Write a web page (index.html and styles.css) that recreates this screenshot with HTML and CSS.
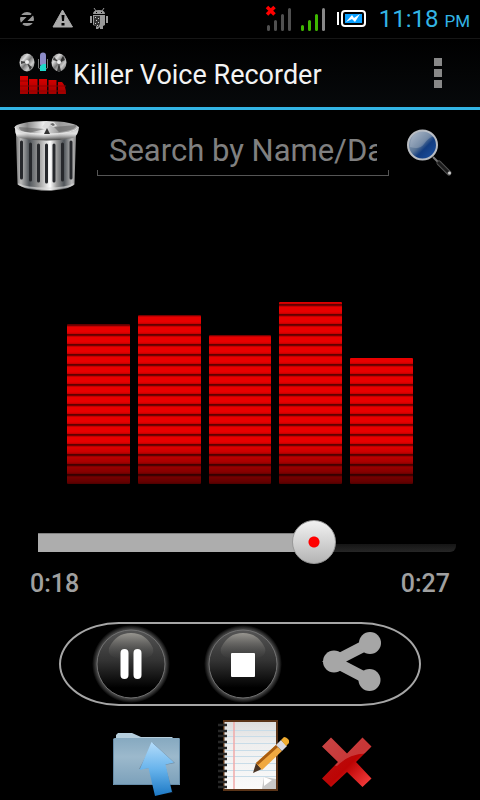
FILE: index.html
```html
<!DOCTYPE html>
<html lang="en">
<head>
    <meta charset="UTF-8">
    <meta name="viewport" content="width=device-width, initial-scale=1.0">
    <title>Killer Voice Recorder</title>
    <link rel="stylesheet" href="styles.css">
</head>
<body>

    <!-- Status bar -->
    <div class="status">
        <svg class="status-left" width="96" height="38" viewBox="16 0 96 38">
            <circle cx="27" cy="19" r="7" fill="#999"/>
            <path d="M20 16h9l-8 8M33 14l-8 8h9" fill="none" stroke="#000" stroke-width="2"/>
            <path d="M62.500 10L72.500 27H53Z" fill="#aaa" stroke="#aaa" stroke-linejoin="round"/>
            <path d="M61.500 15h3l-.5 6h-2zM61.500 23h3v2.500h-3z" fill="#000"/>
            <path d="M94 8l2 3M104 8l-2 3" stroke="#999" stroke-width="1"/>
            <path d="M93 14q0-4 6-4t6 4zM93 15h12v10l-2 1v3h-3v-2l-2 2h-2v-3l-3-1z" fill="#999"/>
            <path d="M90 16h2v7h-2zM106 16h2v7h-2z" fill="#999"/>
            <path d="M94 16h6v8l-2 3-4-2z" fill="#333"/>
            <path d="M95 17h1v1h-1zM98 18h1v1h-1zM96 20h1v1h-1zM98 22h1v1h-1zM95 23h1v1h-1zM97 25h1v1h-1z" fill="#ccc"/>
            <path d="M96 12h1v1h-1zM101 12h1v1h-1z" fill="#000"/>
        </svg>
        <div class="status-right">
            <svg width="106" height="38" viewBox="263 0 106 38">
                <g stroke-width="3" stroke-linecap="round">
                    <path d="M268.500 26.500v3M275.500 21.500v8M282.500 15.500v14M289.500 9.500v20" stroke="#505050"/>
                    <path d="M302.500 26.500v3M309.500 21.500v8M316.500 15.500v14" stroke="#3fb800"/>
                    <path d="M323.500 9.500v20" stroke="#888"/>
                </g>
                <path d="M267 7l7.500 7.500M274.500 7l-7.500 7.500" stroke="#f00" stroke-width="3.500"/>
                <path d="M338 12v13" stroke="#fff" stroke-width="2"/>
                <rect x="342" y="11" width="23" height="15" rx="3" fill="#000" stroke="#fff" stroke-width="2"/>
                <rect x="345" y="14" width="17" height="9" fill="#0aa0ff"/>
                <path d="M346 22l6-7 2 3 6-4-5 8-3-3z" fill="#fff"/>
            </svg>
            <div class="clock">11:18 <span>PM</span></div>
        </div>
    </div>

    <!-- Action bar -->
    <header class="header">
        <svg width="50" height="50" viewBox="18 49 50 50">
            <defs>
                <linearGradient id="reel" x1="0" y1="0" x2="1" y2="1">
                    <stop offset="0" stop-color="#555"/><stop offset=".3" stop-color="#ddd"/>
                    <stop offset=".5" stop-color="#777"/><stop offset=".7" stop-color="#ccc"/>
                    <stop offset="1" stop-color="#444"/>
                </linearGradient>
                <linearGradient id="red" x1="0" y1="0" x2="0" y2="1">
                    <stop offset="0" stop-color="#e00000"/><stop offset="1" stop-color="#a00000"/>
                </linearGradient>
            </defs>
            <ellipse cx="27" cy="63.500" rx="7.500" ry="9" fill="url(#reel)"/>
            <ellipse cx="59" cy="63.500" rx="7.500" ry="9" fill="url(#reel)"/>
            <path d="M27 63l-6-1v3zM27 64l3 7 2-3zM59 63l-5-5-1 3zM59 64l4-7 2 4zM59 64l-2 8h4z" fill="#111" opacity=".75"/>
            <circle cx="27" cy="63" r="2" fill="#eee"/>
            <circle cx="59" cy="63" r="2" fill="#eee"/>
            <path d="M38.500 60v9l3 2h3l3-2v-9" fill="none" stroke="#777"/>
            <rect x="40" y="53.500" width="6" height="14" rx="3" fill="#8c8cc8"/>
            <path d="M40 67l3-2h3v7h-6z" fill="#20d8cc"/>
            <path d="M20 77h8v18h-8zM29 80h8.500v15h-8.500zM39 80h8v15h-8zM48.500 81h8v14h-8zM58 83h4q4 4 4 12h-8z" fill="url(#red)"/>
            <path d="M20 82h8M20 87h46M20 92h46" stroke="#900000"/>
        </svg>
        <h1>Killer Voice Recorder</h1>
        <button class="menu" aria-label="More options">
            <svg width="8" height="30" viewBox="0 0 8 30"><path d="M0 0h8v8H0zM0 11h8v8H0zM0 22h8v8H0z" fill="#888"/></svg>
        </button>
    </header>

    <!-- Search -->
    <form class="search">
        <button type="button" aria-label="Delete recordings">
            <svg width="70" height="82" viewBox="12 110 70 82">
                <defs>
                    <linearGradient id="can" x1="0" y1="0" x2="1" y2="0">
                        <stop offset="0" stop-color="#777"/><stop offset=".08" stop-color="#bbb"/>
                        <stop offset=".22" stop-color="#50555a"/><stop offset=".38" stop-color="#999"/>
                        <stop offset=".57" stop-color="#fff"/><stop offset=".68" stop-color="#999"/>
                        <stop offset=".8" stop-color="#50555a"/><stop offset=".93" stop-color="#bbb"/>
                        <stop offset="1" stop-color="#888"/>
                    </linearGradient>
                    <linearGradient id="lid" x1="0" y1="0" x2="1" y2="0">
                        <stop offset="0" stop-color="#ddd"/><stop offset=".2" stop-color="#888"/>
                        <stop offset=".45" stop-color="#eee"/><stop offset=".7" stop-color="#999"/>
                        <stop offset="1" stop-color="#bbb"/>
                    </linearGradient>
                    <linearGradient id="rim" x1="0" y1="0" x2="0" y2="1">
                        <stop offset="0" stop-color="#fff" stop-opacity=".2"/>
                        <stop offset=".5" stop-color="#fff" stop-opacity=".6"/>
                        <stop offset="1" stop-color="#222" stop-opacity=".8"/>
                    </linearGradient>
                </defs>
                <path d="M16 135l1.500 49q7 6.500 29 6.500t28-6.500l1.500-49z" fill="url(#can)"/>
                <path d="M21.500 142v36M30.500 144v36M38.500 145v36M46.500 145v37M54 145v36M62.500 144v36M71 142v36" stroke="#26282c" stroke-width="3" stroke-linecap="round"/>
                <path d="M18 184q8 4.500 28.500 4.500t27.500-4.500" fill="none" stroke="#ddd" stroke-width="2" opacity=".6"/>
                <path d="M15 128q0 9 5 10 26 5 53 0 5-2 6-11z" fill="url(#lid)"/>
                <path d="M15 128q0 9 5 10 26 5 53 0 5-2 6-11z" fill="url(#rim)"/>
                <ellipse cx="46.500" cy="127.500" rx="32" ry="6.500" fill="url(#lid)"/>
                <path d="M19 127l26 2-15 3.500q-12-1.500-11-5.500zM54 127l22-2q2 5-17 7z" fill="#555" opacity=".5"/>
                <path d="M15 128q4 6 31.500 6t32-7" fill="none" stroke="#f0f0f0" opacity=".7"/>
                <path d="M42 127l4-5 8 0 3 4-4 1-3-2-4 4z" fill="#ddd"/>
                <path d="M50 124l3-1 2 2-2 1z" fill="#666"/>
                <path d="M47 128l3 6h-6z" fill="#333"/>
            </svg>
        </button>
        <input type="text" placeholder="Search by Name/Date" aria-label="Search by name or date">
        <button type="button" aria-label="Search">
            <svg width="50" height="52" viewBox="405 125 50 52">
                <defs>
                    <linearGradient id="glass" x1="0" y1="0" x2="1" y2="1">
                        <stop offset="0" stop-color="#aebac8"/><stop offset=".45" stop-color="#5a7596"/>
                        <stop offset=".6" stop-color="#123c80"/><stop offset="1" stop-color="#1f55a8"/>
                    </linearGradient>
                </defs>
                <path d="M434 157l7 7" stroke="#777" stroke-width="2"/>
                <path d="M440 163l10 10" stroke="#555" stroke-width="5" stroke-linecap="round"/>
                <path d="M439 162l10 10" stroke="#1c1c1c" stroke-width="3"/>
                <circle cx="450.500" cy="173" r="1.500" fill="#ccc"/>
                <circle cx="423.500" cy="145" r="14.500" fill="url(#glass)" stroke="#b8bcc2" stroke-width="2"/>
                <path d="M411 147q10 3 14-3t10-8q-5-6-12-5-12 2-12 16z" fill="#d8dde2" opacity=".25"/>
            </svg>
        </button>
    </form>

    <main>
        <!-- Level meter -->
        <div class="meter">
            <div class="bar" style="height: 88%"></div>
            <div class="bar" style="height: 93%"></div>
            <div class="bar" style="height: 82%"></div>
            <div class="bar" style="height: 100%"></div>
            <div class="bar" style="height: 69%"></div>
        </div>

        <!-- Playback position -->
        <div class="seek">
            <div class="track"><div class="played" style="width: 66%"></div></div>
            <input type="range" min="0" max="100" value="66" aria-label="Playback position">
        </div>
        <div class="times">
            <span>0:18</span>
            <span>0:27</span>
        </div>

        <!-- Player controls -->
        <div class="controls">
            <button aria-label="Pause">
                <svg width="80" height="80" viewBox="0 0 80 80">
                    <defs>
                        <radialGradient id="glow">
                            <stop offset=".84" stop-color="#5a5a5a"/><stop offset=".91" stop-color="#383838"/><stop offset="1" stop-color="#000"/>
                        </radialGradient>
                        <linearGradient id="disc" x1="0" y1="0" x2="0" y2="1">
                            <stop offset="0" stop-color="#555"/><stop offset=".45" stop-color="#333"/><stop offset=".85" stop-color="#000"/>
                        </linearGradient>
                        <linearGradient id="shine" x1="0" y1="0" x2="0" y2="1">
                            <stop offset="0" stop-color="#989690"/><stop offset="1" stop-color="#444" stop-opacity=".1"/>
                        </linearGradient>
                    </defs>
                    <circle cx="40" cy="40" r="39" fill="url(#glow)"/>
                    <circle cx="40" cy="40" r="34" fill="url(#disc)" stroke="#707070"/>
                    <path d="M18 24q7-15 22-15t22 15q2 8-8 10-14 3-28 0-10-2-8-10z" fill="url(#shine)"/>
                    <path d="M33.500 29v22M46.500 29v22" stroke="#fff" stroke-width="8" stroke-linecap="round"/>
                </svg>
            </button>
            <button aria-label="Stop">
                <svg width="80" height="80" viewBox="0 0 80 80">
                    <circle cx="40" cy="40" r="39" fill="url(#glow)"/>
                    <circle cx="40" cy="40" r="34" fill="url(#disc)" stroke="#707070"/>
                    <path d="M18 24q7-15 22-15t22 15q2 8-8 10-14 3-28 0-10-2-8-10z" fill="url(#shine)"/>
                    <rect x="28" y="29" width="24" height="24" rx="1" fill="#fff"/>
                </svg>
            </button>
            <button aria-label="Share">
                <svg width="74" height="80" viewBox="315 624 74 80" fill="#a6a6a6">
                    <path d="M370 643L334 661.500L369.500 680" fill="none" stroke="#a6a6a6" stroke-width="11"/>
                    <circle cx="334" cy="661.500" r="11"/>
                    <circle cx="370" cy="643" r="11"/>
                    <circle cx="369.500" cy="680" r="11"/>
                </svg>
            </button>
        </div>

        <!-- File actions -->
        <div class="actions">
            <button aria-label="Open folder">
                <svg width="76" height="80" viewBox="105 718 76 80">
                    <defs>
                        <linearGradient id="folder" x1="0" y1="0" x2="0" y2="1">
                            <stop offset="0" stop-color="#86a9c0"/><stop offset=".4" stop-color="#9cb9cc"/><stop offset="1" stop-color="#7ba0ba"/>
                        </linearGradient>
                        <linearGradient id="arrow" x1="0" y1="0" x2="0" y2="1">
                            <stop offset="0" stop-color="#b4dcfa"/><stop offset=".5" stop-color="#68b4ec"/><stop offset="1" stop-color="#1c78c4"/>
                        </linearGradient>
                    </defs>
                    <path d="M116 742v-7l2-2h14l9 4h31l4 4v3z" fill="#b6cedd"/>
                    <path d="M113 740q0-2 2-2h64q1 0 1 2v45h-67z" fill="url(#folder)"/>
                    <path d="M113.500 784.500h66M113.500 739v45M179.500 739v45" fill="none" stroke="#668ca8"/>
                    <path d="M153 743l22 20-10 2 8 28-17 2-6-27-11 1z" fill="#234" opacity=".3"/>
                    <path d="M151.500 742l22.500 20.500-8.500 2 6.500 27.500-17 4-6.500-28-9 2z" fill="url(#arrow)"/>
                </svg>
            </button>
            <button aria-label="Edit notes">
                <svg width="76" height="80" viewBox="213 718 76 80">
                    <defs>
                        <linearGradient id="paper" x1="0" y1="0" x2="0" y2="1">
                            <stop offset="0" stop-color="#ddd"/><stop offset=".3" stop-color="#eee"/><stop offset="1" stop-color="#fafafa"/>
                        </linearGradient>
                    </defs>
                    <rect x="223" y="720" width="55" height="71" fill="#5a3418"/>
                    <rect x="224.500" y="722" width="51.500" height="67" fill="url(#paper)"/>
                    <path d="M225 730.500h51M225 736.500h51M225 743.500h51M225 750.500h51M225 756.500h51M225 763.500h51M225 770.500h51M225 776.500h51" stroke="#c8dce8"/>
                    <path d="M234 722v67" stroke="#f0aaaa" stroke-width="1.500"/>
                    <path d="M218 725h9M218 731h9M218 736h9M218 742h9M218 748h9M218 754h9M218 759h9M218 765h9M218 771h9M218 777h9M218 782h9M218 787h9" stroke="#282828" stroke-width="2.500"/>
                    <path d="M262 789l2-12 12 2v10z" fill="#c8c8c8"/>
                    <path d="M264 777l8 3-8 6z" fill="#fff"/>
                    <path d="M253 773l3-10 6 6z" fill="#4a3424"/>
                    <path d="M256 763l20-18 6 6-20 19z" fill="#f0a840"/>
                    <path d="M256 763l20-18 2 2-20 18z" fill="#a85c10"/>
                    <path d="M276 745l5-5 6 6-5 5z" fill="#d8d8e0"/>
                    <path d="M281 740l3-3q2 0 4 2t1 4l-3 3z" fill="#f0ac30"/>
                </svg>
            </button>
            <button aria-label="Close">
                <svg width="54" height="80" viewBox="320 718 54 80">
                    <defs>
                        <linearGradient id="cross" x1="0" y1="0" x2="1" y2="1">
                            <stop offset="0" stop-color="#b81818"/><stop offset=".55" stop-color="#bc0404"/><stop offset="1" stop-color="#ff4848"/>
                        </linearGradient>
                        <clipPath id="crossShape">
                            <path d="M330 737.500l16 16 15.500-16 9 9-15.500 15.500 15.500 16.500-9 8.500-15.500-15-16 15-9-8.500 16-16.500-16-15.500z"/>
                        </clipPath>
                    </defs>
                    <g clip-path="url(#crossShape)">
                        <path d="M320 736h52v52h-52z" fill="url(#cross)"/>
                        <path d="M320 736h52v18q-22-3-36 12l-16-4z" fill="#fff" opacity=".2"/>
                    </g>
                </svg>
            </button>
        </div>
    </main>

</body>
</html>
```
FILE: styles.css
```css
* {
    margin: 0;
    padding: 0;
    box-sizing: border-box;
}

body {
    font-family: Roboto, "Liberation Sans", sans-serif;
    background-color: #000;
    color: #f3f3f3;
}

button {
    background: none;
    border: none;
    cursor: pointer;
}

svg {
    display: block;
}

/* Status bar */
.status {
    display: flex;
    justify-content: space-between;
    padding: 0 10px 0 16px;
    height: 39px;
    border-bottom: 1px solid #161616;
}

.status-right {
    display: flex;
    gap: 10px;
}

.clock {
    font-size: 24px;
    line-height: 39px;
    color: #33b5e5;
}

.clock span {
    font-size: 17px;
}

/* Action bar */
.header {
    display: flex;
    align-items: center;
    gap: 5px;
    height: 71px;
    padding: 0 18px;
    background: linear-gradient(#000, #07090b);
    border-bottom: 3px solid #33b5e5;
}

.header h1 {
    flex: 1;
    padding-top: 4px;
    font-size: 27px;
    font-weight: 400;
}

.menu {
    padding: 10px 20px;
}

/* Search */
.search {
    display: flex;
    align-items: center;
    gap: 15px;
    padding: 0 26px 0 12px;
}

.search input {
    flex: 1;
    min-width: 0;
    height: 50px;
    padding: 0 12px;
    border: none;
    border-bottom: 1px solid #555;
    background:
        linear-gradient(#555, #555) left bottom / 1px 5px no-repeat,
        linear-gradient(#555, #555) right bottom / 1px 5px no-repeat;
    color: #f3f3f3;
    font-family: inherit;
    font-size: 31px;
    outline: none;
}

.search input::placeholder {
    color: #808080;
}

/* Level meter */
.meter {
    display: flex;
    align-items: flex-end;
    gap: 8px;
    height: 182px;
    margin: 110px 67px 0;
}

.bar {
    flex: 1;
    border-radius: 1px;
    background:
        linear-gradient(to top, rgba(0, 0, 0, 0.6), rgba(0, 0, 0, 0.3) 20px, transparent 40px),
        repeating-linear-gradient(to top, #c00000 0, #e80000 2px, #e80000 7px, #a00000 8px, #500000 9px, #700000 10px);
}

/* Playback position */
.seek {
    display: grid;
    align-items: center;
    margin: 36px 24px 0 38px;
}

.seek > * {
    grid-area: 1 / 1;
}

.track {
    display: flex;
    height: 19px;
    border-radius: 0 0 6px 0;
    background: linear-gradient(#151515, #262626) bottom / 100% 8px no-repeat;
}

.played {
    background-color: #adadad;
    border-top: 1px solid #808080;
}

.seek input {
    -webkit-appearance: none;
    appearance: none;
    height: 44px;
    margin: 0 -22px;
    background: none;
}

.seek input::-webkit-slider-thumb {
    -webkit-appearance: none;
    width: 44px;
    height: 44px;
    border: 1px solid #999;
    border-radius: 50%;
    background: radial-gradient(circle, #f00 5px, transparent 6px), linear-gradient(#f2f2f2, #b4b4b4);
}

.times {
    display: flex;
    justify-content: space-between;
    padding: 6px 30px 0;
    font-size: 25px;
    font-weight: 500;
    line-height: 28px;
    color: #a0a0a0;
}

/* Player controls */
.controls {
    display: flex;
    justify-content: center;
    gap: 32px;
    margin: 24px 59px 12px;
    border: 2px solid #a6a6a6;
    border-radius: 60px / 42px;
}

/* File actions */
.actions {
    display: flex;
    justify-content: center;
    gap: 32px;
}
```
